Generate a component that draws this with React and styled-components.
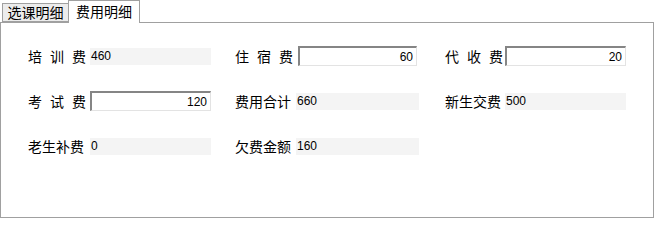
import React from 'react'
import styled, { createGlobalStyle } from 'styled-components'

const GlobalStyle = createGlobalStyle`
  html, body {
    margin: 0;
    padding: 0;
    background: #fff;
  }
  body {
    font-family: "Noto Sans CJK SC", "Liberation Sans", sans-serif;
    color: #000;
  }
`

const Container = styled.div`
  width: 655px;
  height: 220px;
  overflow: hidden;
`

const TabStrip = styled.div`
  display: flex;
  align-items: flex-end;
  height: 22px;
  padding-left: 2px;
  position: relative;
  z-index: 1;
`

const Tab = styled.div`
  box-sizing: border-box;
  width: ${p => (p.active ? '72px' : '67px')};
  height: ${p => (p.active ? '23px' : '19px')};
  margin-left: ${p => (p.active ? '-1px' : '0')};
  margin-bottom: ${p => (p.active ? '-1px' : '0')};
  padding-top: ${p => (p.active ? '2px' : '0')};
  border: 1px solid #a0a0a0;
  border-bottom: ${p => (p.active ? 'none' : '1px solid #a0a0a0')};
  background: ${p => (p.active ? '#fff' : '#ececec')};
  font-size: 14px;
  line-height: 17px;
  text-align: center;
`

const Panel = styled.div`
  box-sizing: border-box;
  width: 654px;
  height: 196px;
  border: 1px solid #a0a0a0;
  padding: 23px 0 0 27px;
`

const FieldGrid = styled.div`
  display: grid;
  grid-template-columns: 207px 210px auto;
  row-gap: 25px;
`

const Cell = styled.div`
  display: flex;
  align-items: center;
  gap: ${p => p.gap || 4}px;
  height: 20px;
`

const Label = styled.span`
  width: 58px;
  font-size: 14px;
  line-height: 16px;
  text-align: ${p => (p.spread ? 'justify' : 'left')};
  text-align-last: ${p => (p.spread ? 'justify' : 'left')};
  white-space: nowrap;
`

const ReadValue = styled.div`
  box-sizing: border-box;
  width: ${p => p.width || 121}px;
  height: 17px;
  padding-left: 1px;
  background: #f4f4f4;
  font-family: "Liberation Sans", Arial, sans-serif;
  font-size: 12px;
  line-height: 17px;
`

const ValueInput = styled.input`
  box-sizing: border-box;
  width: ${p => p.width || 121}px;
  height: 20px;
  margin: 0;
  padding: 0 3px 0 2px;
  border-style: solid;
  border-width: 2px 1px 1px 2px;
  border-color: #858585 #e3e3e3 #e3e3e3 #858585;
  background: #fff;
  font-family: "Liberation Sans", Arial, sans-serif;
  font-size: 12px;
  color: #000;
  text-align: right;
  outline: none;
`

const fields = [
  { label: '培训费', value: '460' },
  { label: '住宿费', value: '60', input: true, width: 119, gap: 5 },
  { label: '代收费', value: '20', input: true, gap: 2 },
  { label: '考试费', value: '120', input: true },
  { label: '费用合计', value: '660', width: 123, gap: 3 },
  { label: '新生交费', value: '500', gap: 2 },
  { label: '老生补费', value: '0' },
  { label: '欠费金额', value: '160', width: 123, gap: 3 },
]

const Field = ({ label, value, input, width, gap }) => (
  <Cell gap={gap}>
    <Label spread={label.length < 4}>{label}</Label>
    {input ? (
      <ValueInput readOnly value={value} width={width} />
    ) : (
      <ReadValue width={width}>{value}</ReadValue>
    )}
  </Cell>
)

const App = () => (
  <Container>
    <GlobalStyle />
    <TabStrip>
      <Tab>选课明细</Tab>
      <Tab active>费用明细</Tab>
    </TabStrip>
    <Panel>
      <FieldGrid>
        {fields.map(f => (
          <Field key={f.label} {...f} />
        ))}
      </FieldGrid>
    </Panel>
  </Container>
)

export default App
